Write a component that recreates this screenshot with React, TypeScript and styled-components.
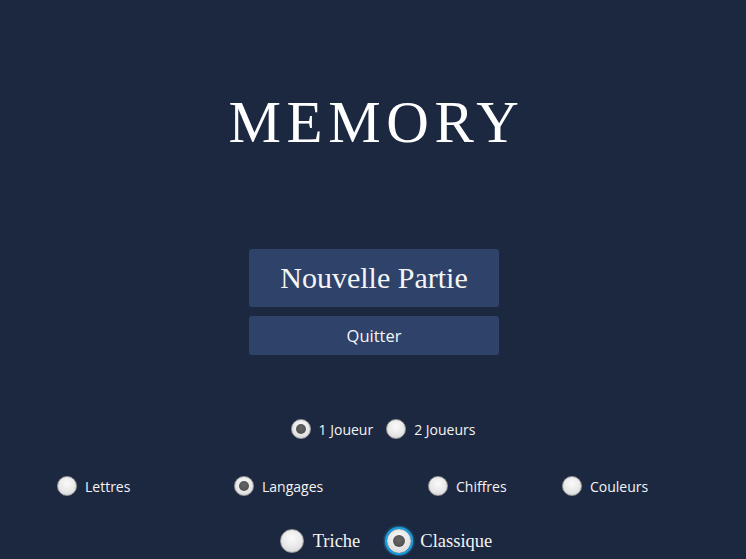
import React from "react";
import styled, { createGlobalStyle, css } from "styled-components";

const Global = createGlobalStyle`
  html, body { margin: 0; padding: 0; background: #1c2840; }
  body { font-family: "Open Sans", "Noto Sans", sans-serif; color: #f2f2f2; }
`;

const Page = styled.div`
  width: 746px;
  height: 559px;
  background: #1c2840;
  display: flex;
  flex-direction: column;
  align-items: stretch;
  overflow: hidden;
`;

const Title = styled.h1`
  margin: 93px 0 0 0;
  font-family: "Liberation Serif", "Times New Roman", serif;
  font-weight: 400;
  font-size: 59px;
  line-height: 59px;
  letter-spacing: 5.6px;
  text-align: center;
  color: #ffffff;
  padding-left: 7px;
`;

const Buttons = styled.div`
  margin-top: 97px;
  display: flex;
  flex-direction: column;
  align-items: center;
  gap: 9px;
  padding-left: 2px;
`;

const MenuButton = styled.button<{ $big?: boolean }>`
  width: 250px;
  border: none;
  border-radius: 3px;
  background: #2f4269;
  color: #f5f5f5;
  cursor: pointer;
  padding: 0;
  ${(p) =>
    p.$big
      ? css`
          height: 58px;
          font-family: "Liberation Serif", "Times New Roman", serif;
          font-size: 30px;
        `
      : css`
          height: 39px;
          font-family: "Open Sans", "Noto Sans", sans-serif;
          font-size: 16.5px;
        `}
`;

const Row = styled.div<{ $top: number; $shift: number; $h: number; $gap: number }>`
  margin-top: ${(p) => p.$top}px;
  height: ${(p) => p.$h}px;
  display: flex;
  justify-content: center;
  align-items: center;
  gap: ${(p) => p.$gap}px;
  padding-left: ${(p) => p.$shift}px;
`;

const GridRow = styled.div`
  margin-top: 37px;
  height: 20px;
  display: grid;
  grid-template-columns: 177px 194px 134px auto;
  padding-left: 57px;
  align-items: center;
`;

const Option = styled.label<{ $serif?: boolean }>`
  display: inline-flex;
  align-items: center;
  gap: ${(p) => (p.$serif ? "9px" : "8px")};
  font-family: ${(p) =>
    p.$serif
      ? `"Liberation Serif", "Times New Roman", serif`
      : `"Open Sans", "Noto Sans", sans-serif`};
  font-size: ${(p) => (p.$serif ? "18.5px" : "14px")};
  color: #f4f4f4;
  white-space: nowrap;
`;

const Dot = styled.span<{ $size: number; $on?: boolean; $focus?: boolean }>`
  position: relative;
  width: ${(p) => p.$size}px;
  height: ${(p) => p.$size}px;
  border-radius: 50%;
  box-sizing: border-box;
  background: radial-gradient(circle at 50% 35%, #fafafa 0%, #e8e8e8 55%, #cfcfcf 100%);
  border: 1px solid #9a9a9a;
  flex: none;
  ${(p) =>
    p.$focus &&
    css`
      box-shadow: 0 0 0 2px #1aa0e0, 0 0 2px 3px rgba(40, 170, 230, 0.5);
      border-color: #e0e0e0;
    `}
  ${(p) =>
    p.$on &&
    css`
      &::after {
        content: "";
        position: absolute;
        left: 50%;
        top: 50%;
        width: ${Math.round(p.$size * 0.48)}px;
        height: ${Math.round(p.$size * 0.48)}px;
        transform: translate(-50%, -50%);
        border-radius: 50%;
        background: radial-gradient(circle at 50% 40%, #666 0%, #4a4a4a 100%);
      }
    `}
`;

type RadioProps = { label: string; on?: boolean; size?: number; serif?: boolean; focus?: boolean };

function Radio({ label, on, size = 20, serif, focus }: RadioProps) {
  return (
    <Option $serif={serif}>
      <Dot $size={size} $on={on} $focus={focus} />
      <span>{label}</span>
    </Option>
  );
}

export default function App() {
  return (
    <Page>
      <Global />
      <Title>MEMORY</Title>
      <Buttons>
        <MenuButton $big>Nouvelle Partie</MenuButton>
        <MenuButton>Quitter</MenuButton>
      </Buttons>
      <Row $top={64} $shift={20} $h={20} $gap={13}>
        <Radio label="1 Joueur" on />
        <Radio label="2 Joueurs" />
      </Row>
      <GridRow>
        <Radio label="Lettres" />
        <Radio label="Langages" on />
        <Radio label="Chiffres" />
        <Radio label="Couleurs" />
      </GridRow>
      <Row $top={33} $shift={26} $h={24} $gap={27}>
        <Radio label="Triche" size={24} serif />
        <Radio label="Classique" size={24} serif on focus />
      </Row>
    </Page>
  );
}
